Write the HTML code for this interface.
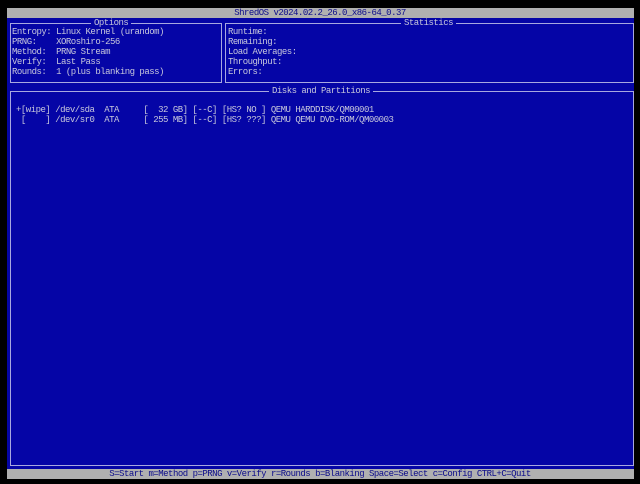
<!DOCTYPE html>
<html><head><style>
body{margin:0;width:640px;height:484px;background:#000;overflow:hidden;position:relative;font-family:"Liberation Mono",monospace;}
.t{position:absolute;font-size:9px;letter-spacing:-0.5px;line-height:10px;white-space:pre;color:#c8c8dc;}
.bar{position:absolute;left:7px;width:627px;height:10px;background:#b0b0b0;}
.blue{position:absolute;left:7px;top:18px;width:627px;height:451px;background:#0505a6;}
.box{position:absolute;border:1px solid #a8a8e0;}
.ttl{position:absolute;background:#0505a6;padding:0 3px;}
</style></head><body>
<div class="bar" style="top:8px"></div>
<div class="t" style="left:0;width:640px;top:8px;text-align:center;color:#0a0a8a">ShredOS v2024.02.2_26.0_x86-64_0.37</div>
<div class="blue"></div>
<div class="box" style="left:10px;top:23px;width:210px;height:58px"></div>
<div class="box" style="left:225px;top:23px;width:407px;height:58px"></div>
<div class="box" style="left:10px;top:91px;width:622px;height:373px"></div>
<div class="t ttl" style="left:91px;top:18px">Options</div>
<div class="t ttl" style="left:401px;top:18px">Statistics</div>
<div class="t ttl" style="left:269px;top:86px">Disks and Partitions</div>
<div class="t" style="left:12px;top:27px">Entropy: Linux Kernel (urandom)
PRNG:    XORoshiro-256
Method:  PRNG Stream
Verify:  Last Pass
Rounds:  1 (plus blanking pass)</div>
<div class="t" style="left:228px;top:27px">Runtime:
Remaining:
Load Averages:
Throughput:
Errors:</div>
<div class="t" style="left:16px;top:105px">+[wipe] /dev/sda  ATA     [  32 GB] [--C] [HS? NO ] QEMU HARDDISK/QM00001
 [    ] /dev/sr0  ATA     [ 255 MB] [--C] [HS? ???] QEMU QEMU DVD-ROM/QM00003</div>
<div class="bar" style="top:469px"></div>
<div class="t" style="left:0;width:640px;top:469px;text-align:center;color:#0a0a8a">S=Start m=Method p=PRNG v=Verify r=Rounds b=Blanking Space=Select c=Config CTRL+C=Quit</div>
</body></html>
